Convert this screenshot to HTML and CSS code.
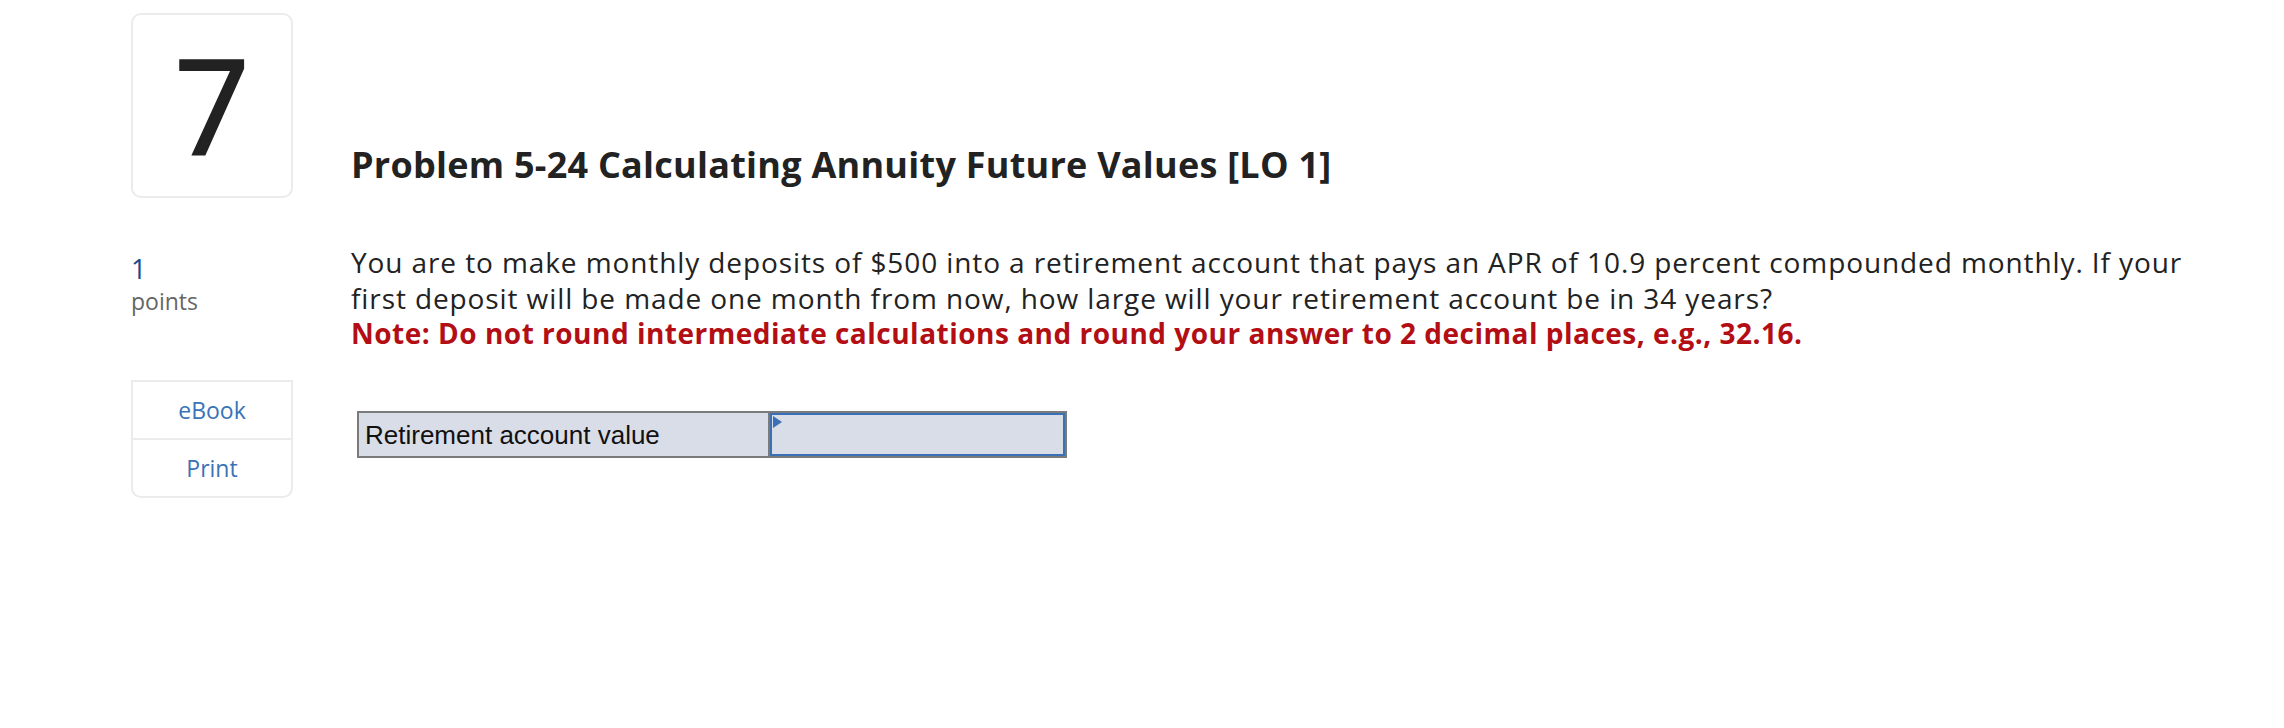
FILE: index.html
```html
<!DOCTYPE html>
<html lang="en">
<head>
<meta charset="utf-8">
<title>Problem 5-24</title>
<link rel="stylesheet" href="styles.css">
</head>
<body>
<div class="page">
  <div class="num-card"><span class="num">7</span></div>
  <h1 class="title">Problem 5-24 Calculating Annuity Future Values [LO 1]</h1>

  <div class="points"><div class="pts-val">1</div><div class="pts-lbl">points</div></div>
  <div class="question">
    <p class="q-text">You are to make monthly deposits of $500 into a retirement account that pays an APR of 10.9 percent compounded monthly. If your first deposit will be made one month from now, how large will your retirement account be in 34 years?</p>
    <p class="q-note">Note: Do not round intermediate calculations and round your answer to 2 decimal places, e.g., 32.16.</p>
  </div>

  <div class="links">
    <a class="link" href="#">eBook</a>
    <a class="link" href="#">Print</a>
  </div>
  <div class="answer">
    <table class="ans-table">
      <tr>
        <td class="ans-label">Retirement account value</td>
        <td class="ans-input"><span class="flag"></span></td>
      </tr>
    </table>
  </div>
</div>
</body>
</html>
```
FILE: styles.css
```css
html, body {
  margin: 0;
  padding: 0;
  background: #ffffff;
}
body {
  font-family: "Open Sans", Lato, sans-serif;
  color: #222222;
  font-variant-ligatures: none;
}
.page {
  display: grid;
  grid-template-columns: 162px 1fr;
  column-gap: 58px;
  padding: 13px 0 0 131px;
}
.num-card {
  box-sizing: border-box;
  width: 162px;
  height: 185px;
  border: 2px solid #ebebeb;
  border-radius: 10px;
  display: flex;
  align-items: center;
  justify-content: center;
}
.num {
  font-size: 132px;
  line-height: 1;
  color: #222222;
  font-weight: 400;
  -webkit-text-stroke: 2px #222222;
  margin-top: -4px;
}
.title {
  align-self: start;
  margin: 130px 0 0 0;
  font-size: 36px;
  line-height: 44px;
  font-weight: 700;
  color: #222222;
  letter-spacing: 0.25px;
}
.points {
  margin-top: 55px;
}
.pts-val {
  font-size: 27px;
  line-height: 32px;
  color: #1b4b8a;
}
.pts-lbl {
  font-size: 23px;
  line-height: 32px;
  color: #666666;
}
.question {
  margin-top: 47px;
  max-width: 1860px;
}
.q-text, .q-note {
  margin: 0;
  font-size: 28px;
  line-height: 35.5px;
}
.q-text {
  letter-spacing: 0.9px;
}
.q-note {
  color: #b30e14;
  font-weight: 700;
  letter-spacing: 0.5px;
}
.links {
  margin-top: 28px;
  box-sizing: border-box;
  width: 162px;
  border: 2px solid #ebebeb;
  border-radius: 0 0 10px 10px;
  display: flex;
  flex-direction: column;
  align-self: start;
}
.link {
  display: block;
  text-align: center;
  color: #3a73b8;
  text-decoration: none;
  font-size: 23px;
  line-height: 56px;
}
.link + .link {
  border-top: 2px solid #ebebeb;
}
.answer {
  margin-top: 59px;
  padding-left: 6px;
}
.ans-table {
  border-collapse: collapse;
  font-family: "Liberation Sans", Arial, sans-serif;
}
.ans-label {
  box-sizing: border-box;
  width: 411px;
  height: 45px;
  padding: 2px 6px 0 6px;
  background: #d9dde8;
  border: 2px solid #7b7b7b;
  font-size: 26px;
  color: #111111;
}
.ans-input {
  position: relative;
  box-sizing: border-box;
  width: 297px;
  height: 45px;
  padding: 0;
  background: #d9dde8;
  border: 2px solid #7b7b7b;
  box-shadow: inset 0 0 0 2px #3a70b5;
}
.flag {
  position: absolute;
  top: 3px;
  left: 3px;
  width: 0;
  height: 0;
  border-top: 6px solid transparent;
  border-bottom: 6px solid transparent;
  border-left: 9px solid #3a70b5;
}
```
